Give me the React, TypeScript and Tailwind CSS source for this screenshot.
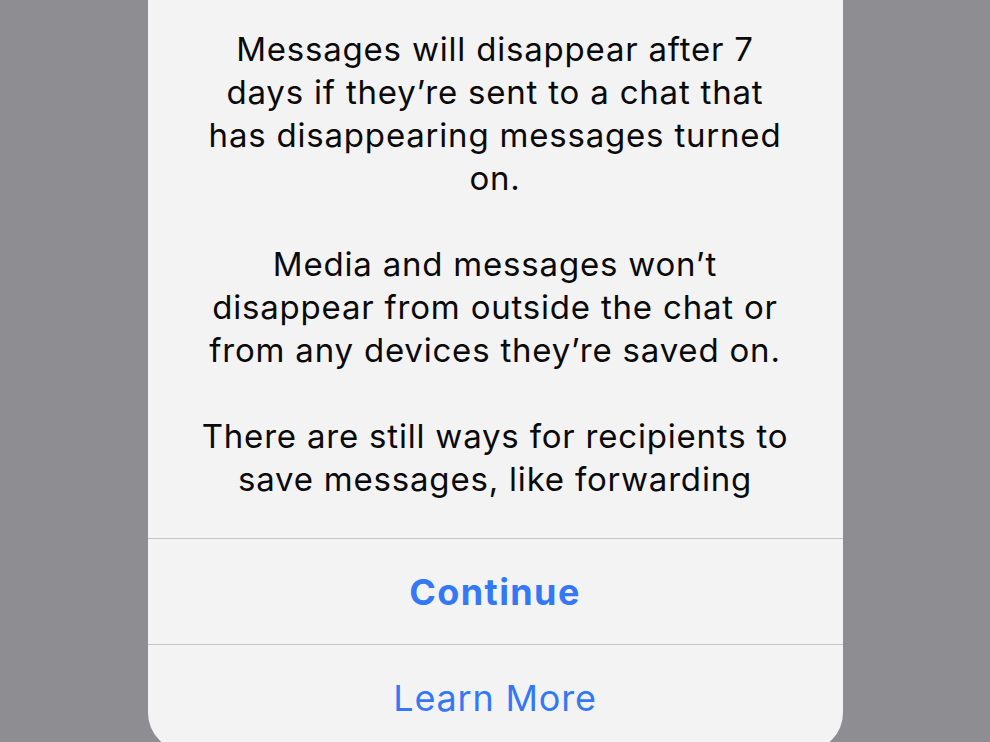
import React from "react";

const p1 = [
  "Messages will disappear after 7",
  "days if they\u2019re sent to a chat that",
  "has disappearing messages turned",
  "on.",
];
const p2 = [
  "Media and messages won\u2019t",
  "disappear from outside the chat or",
  "from any devices they\u2019re saved on.",
];
const p3 = [
  "There are still ways for recipients to",
  "save messages, like forwarding",
];

function Para({ lines }: { lines: string[] }) {
  return (
    <div className="flex flex-col items-center">
      {lines.map((l) => (
        <div key={l} className="whitespace-nowrap h-[43px] leading-[43px]">
          {l}
        </div>
      ))}
    </div>
  );
}

export default function App() {
  return (
    <div
      className="w-[990px] h-[742px] bg-[#8e8e92] flex justify-center overflow-hidden"
      style={{ fontFamily: "Inter, 'Noto Sans', sans-serif" }}
    >
      <div className="w-[695px] h-[751px] shrink-0 bg-[#f3f3f4] rounded-b-[38px] flex flex-col">
        <div className="pt-[28px] flex flex-col items-center gap-[43px] text-[33px] text-[#0a0a0a] tracking-[0.8px] h-[538px]">
          <Para lines={p1} />
          <Para lines={p2} />
          <Para lines={p3} />
        </div>
        <div className="h-px bg-[#c4c4c6]" />
        <div className="h-[105px] flex items-center justify-center text-[36px] font-bold tracking-[1.4px] text-[#3478f6]">
          Continue
        </div>
        <div className="h-px bg-[#c4c4c6]" />
        <div className="h-[105px] flex items-center justify-center text-[36px] tracking-[0.8px] text-[#3478f6]">
          Learn More
        </div>
      </div>
    </div>
  );
}
